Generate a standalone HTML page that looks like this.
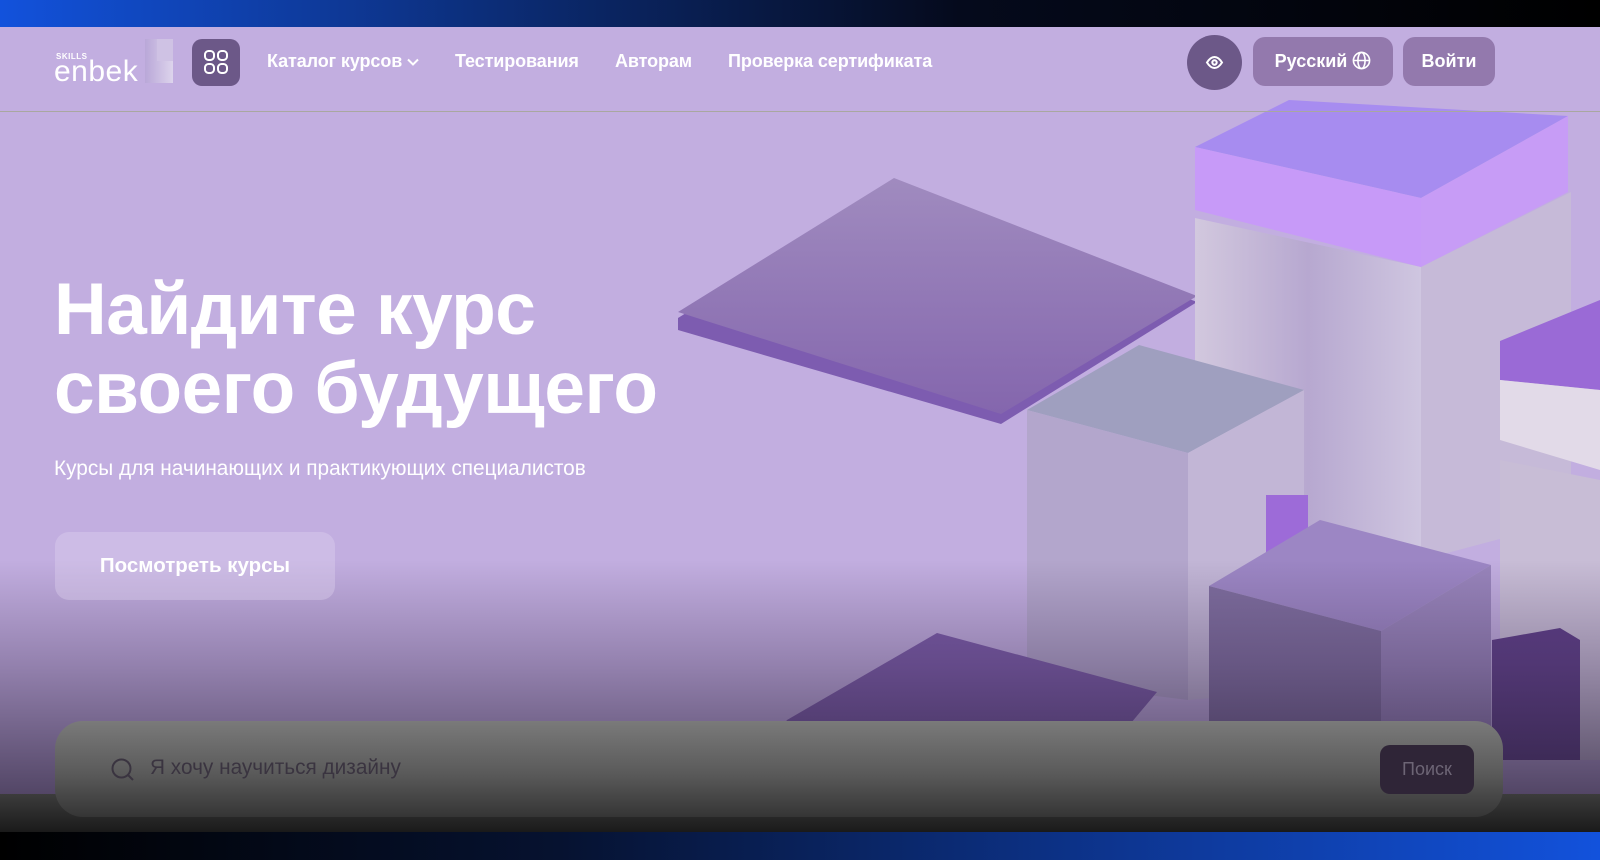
<!DOCTYPE html>
<html><head><meta charset="utf-8"><style>
*{margin:0;padding:0;box-sizing:border-box}
body{width:1600px;height:860px;overflow:hidden;position:relative;background:#c2aee0;font-family:"Liberation Sans",sans-serif;color:#fff}
.top{position:absolute;left:0;top:0;width:1600px;height:27px;background:linear-gradient(90deg,#1252dc 0%,#0c2e7a 30%,#050a1c 60%,#000 100%)}
.bot{position:absolute;left:0;top:832px;width:1600px;height:28px;background:linear-gradient(90deg,#000 0%,#061230 35%,#0d3590 70%,#1252dc 100%)}
svg.bg{position:absolute;left:0;top:27px}
.shade{position:absolute;left:0;top:560px;width:1600px;height:234px;background:linear-gradient(180deg,rgba(60,50,80,0) 0%,rgba(60,45,80,.35) 45%,rgba(40,30,55,.72) 100%)}
.band{position:absolute;left:0;top:794px;width:1600px;height:38px;background:linear-gradient(180deg,#3c3c3c,#1a1a1a)}
.line{position:absolute;left:0;top:111px;width:1600px;height:1px;background:#a9a7a0}
.nav a{position:absolute;top:51px;font-size:18px;font-weight:bold;color:#fff;text-decoration:none;letter-spacing:-.1px}
.grid{position:absolute;left:192px;top:39px;width:48px;height:47px;border-radius:10px;background:#6c5888}
.eye{position:absolute;left:1187px;top:35px;width:55px;height:55px;border-radius:50%;background:#6c5888}
.btn{position:absolute;top:37px;height:49px;border-radius:12px;background:#9379ad;font-size:18px;font-weight:bold;line-height:49px;text-align:center}
h1{position:absolute;left:54px;top:270px;font-size:73px;line-height:79px;font-weight:bold;letter-spacing:-.5px}
.sub{position:absolute;left:54px;top:457px;font-size:20.8px}
.cta{position:absolute;left:55px;top:532px;width:280px;height:68px;border-radius:14px;background:rgba(225,215,240,.35);font-size:20.5px;font-weight:bold;line-height:68px;text-align:center}
.search{position:absolute;left:55px;top:721px;width:1448px;height:96px;border-radius:28px;background:linear-gradient(180deg,#7a7a7a 0%,#5a5a5a 55%,#353535 100%)}
.search .ph{position:absolute;left:95px;top:35px;font-size:20.8px;color:#3a3440}
.sbtn{position:absolute;right:29px;top:24px;width:94px;height:49px;border-radius:10px;background:#2f2537;color:#6d6575;font-size:18px;line-height:49px;text-align:center}
</style></head><body>
<svg class="bg" width="1600" height="805" viewBox="0 27 1600 805">
<defs>
<linearGradient id="pl" x1="0" y1="0" x2="0" y2="1"><stop offset="0" stop-color="#a08bbf"/><stop offset="1" stop-color="#8466ad"/></linearGradient>
<linearGradient id="gl" x1="0" y1="0" x2="1" y2="0"><stop offset="0" stop-color="#d2c8de"/><stop offset=".5" stop-color="#b7a8d0"/><stop offset="1" stop-color="#cfc6e0"/></linearGradient>
</defs>
<polygon points="678,318 894,184 1197,302 1001,424 678,330" fill="#7d5cb0"/>
<polygon points="678,312 894,178 1197,296 1001,414" fill="url(#pl)"/>
<polygon points="1195,218 1421,267 1421,560 1195,540" fill="url(#gl)"/>
<polygon points="1421,267 1571,192 1571,520 1421,560" fill="#c6bad8"/>
<polygon points="1195,147 1289,100 1568,116 1421,198" fill="#a78cf0"/>
<polygon points="1195,147 1421,198 1421,267 1195,210" fill="#c79af8"/>
<polygon points="1421,198 1568,116 1568,192 1421,267" fill="#c79cf6"/>
<polygon points="1500,341 1600,300 1600,390 1500,380" fill="#9a6ad6"/>
<polygon points="1500,380 1600,390 1600,470 1500,440" fill="#e2dae8"/>
<polygon points="1500,460 1600,480 1600,760 1500,760" fill="#c8bdd6"/>
<polygon points="1027,410 1139,345 1304,390 1188,453" fill="#9f9fbf"/>
<polygon points="1027,410 1188,453 1188,700 1027,680" fill="#b3a6cc"/>
<polygon points="1188,453 1304,390 1304,690 1188,700" fill="#c2b6d6"/>
<rect x="1266" y="495" width="42" height="60" fill="#9d6bd8"/>
<polygon points="787,720 937,633 1157,692 1100,760 760,760" fill="#7a5aa8"/>
<polygon points="1209,586 1320,520 1491,565 1381,631" fill="#9c86c4"/>
<polygon points="1209,586 1381,631 1381,760 1209,760" fill="#7e6d9e"/>
<polygon points="1381,631 1491,565 1491,760 1381,760" fill="#9884bb"/>
<polygon points="1492,640 1560,628 1580,640 1580,760 1492,760" fill="#5c3c86"/>
</svg>
<div class="shade"></div>
<div class="band"></div>
<div class="top"></div>
<div class="bot"></div>
<div class="line"></div>

<div style="position:absolute;left:56px;top:52px;font-size:8px;font-weight:bold;letter-spacing:.5px">SKILLS</div>
<div style="position:absolute;left:54px;top:57px;font-size:30px;line-height:30px;letter-spacing:.5px">enbek</div>
<div style="position:absolute;left:145px;top:39px;width:28px;height:44px;background:linear-gradient(90deg,#b9a7d8,#ddd4ec)"></div>
<div style="position:absolute;left:157px;top:39px;width:16px;height:22px;background:#cfc2e4"></div>
<div class="grid"><svg width="48" height="47" viewBox="0 0 48 47" fill="none" stroke="#fff" stroke-width="2"><rect x="13" y="12" width="9" height="9" rx="3.5"/><rect x="26" y="12" width="9" height="9" rx="3.5"/><rect x="13" y="25" width="9" height="9" rx="3.5"/><rect x="26" y="25" width="9" height="9" rx="3.5"/></svg></div>
<div class="nav">
<a style="left:267px">Каталог курсов <svg width="12" height="8" viewBox="0 0 12 8" style="vertical-align:middle"><path d="M1 1.5l5 5 5-5" stroke="#fff" stroke-width="2" fill="none"/></svg></a>
<a style="left:455px">Тестирования</a>
<a style="left:615px">Авторам</a>
<a style="left:728px">Проверка сертификата</a>
</div>
<div class="eye"><svg width="55" height="55" viewBox="0 0 55 55" fill="none" stroke="#fff" stroke-width="2"><path d="M20 27.5c2.5-4 5-5.5 7.5-5.5s5 1.5 7.5 5.5c-2.5 4-5 5.5-7.5 5.5s-5-1.5-7.5-5.5z"/><circle cx="27.5" cy="27.5" r="2.2"/></svg></div>
<div class="btn" style="left:1253px;width:140px">Русский <svg width="19" height="19" viewBox="0 0 20 20" fill="none" stroke="#fff" stroke-width="1.7" style="vertical-align:-3px"><circle cx="10" cy="10" r="8.5"/><ellipse cx="10" cy="10" rx="3.8" ry="8.5"/><path d="M1.5 10h17"/></svg></div>
<div class="btn" style="left:1403px;width:92px">Войти</div>

<h1>Найдите курс<br>своего будущего</h1>
<div class="sub">Курсы для начинающих и практикующих специалистов</div>
<div class="cta">Посмотреть курсы</div>

<div class="search">
<svg style="position:absolute;left:55px;top:36px" width="26" height="26" viewBox="0 0 26 26" fill="none" stroke="#3a3440" stroke-width="2"><circle cx="11.5" cy="11.5" r="9"/><path d="M18 18l5 5"/></svg>
<div class="ph">Я хочу научиться дизайну</div>
<div class="sbtn">Поиск</div>
</div>
</body></html>
